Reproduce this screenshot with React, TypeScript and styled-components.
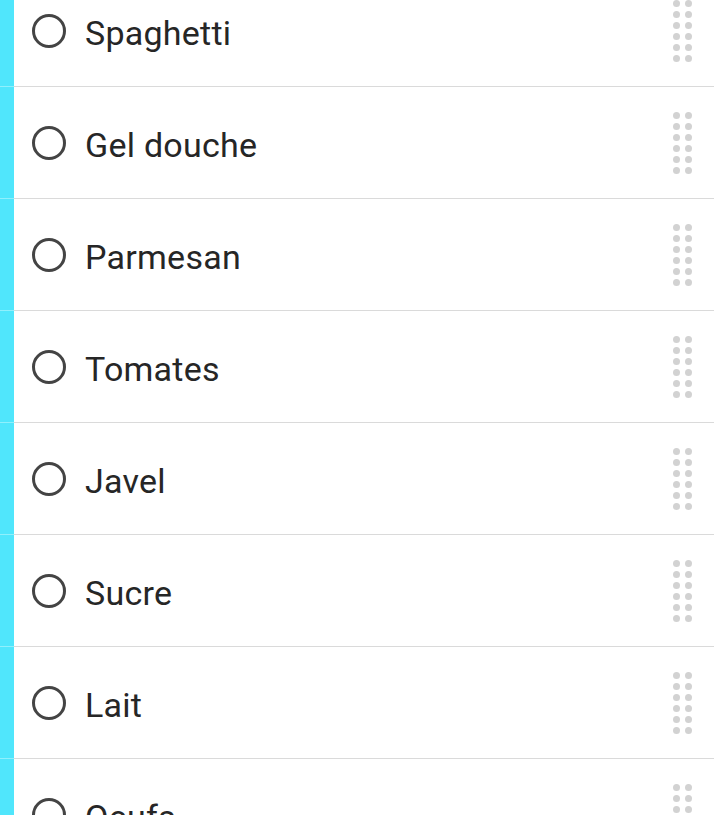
import React, { useLayoutEffect, useRef } from 'react';
import styled, { createGlobalStyle } from 'styled-components';

const GlobalStyle = createGlobalStyle`
  html, body {
    margin: 0;
    padding: 0;
    background: #ffffff;
    font-family: Roboto, "Noto Sans", sans-serif;
  }
`;

const Viewport = styled.div`
  height: 100vh;
  overflow-y: auto;
  scrollbar-width: none;
  &::-webkit-scrollbar {
    display: none;
  }
`;

const List = styled.ul`
  list-style: none;
  margin: 0;
  padding: 0;
`;

const Row = styled.li`
  display: flex;
  height: 112px;
`;

const Stripe = styled.div`
  width: 14px;
  flex-shrink: 0;
  background: #50e6fc;
  box-shadow: inset 0 -1px 0 #8ff0fd;
`;

const Content = styled.div`
  flex: 1;
  display: flex;
  align-items: center;
  padding: 0 22px 0 18px;
  border-bottom: 1px solid #dadada;
`;

const Check = styled.span`
  width: 28px;
  height: 28px;
  border: 3px solid #444444;
  border-radius: 50%;
  flex-shrink: 0;
`;

const Label = styled.span`
  flex: 1;
  margin-left: 19px;
  padding-top: 4px;
  font-size: 34px;
  color: #262626;
  letter-spacing: 0.25px;
`;

const Handle = styled.div`
  display: grid;
  grid-template-columns: repeat(2, 7px);
  grid-auto-rows: 7px;
  column-gap: 5px;
  row-gap: 4px;
`;

const Dot = styled.span`
  border-radius: 50%;
  background: #d2d2d2;
`;

const items = ['Spaghetti', 'Gel douche', 'Parmesan', 'Tomates', 'Javel', 'Sucre', 'Lait', 'Oeufs'];

export default function App() {
  const ref = useRef<HTMLDivElement>(null);

  useLayoutEffect(() => {
    if (ref.current) ref.current.scrollTop = 25;
  }, []);

  return (
    <>
      <GlobalStyle />
      <Viewport ref={ref}>
        <List>
          {items.map((name) => (
            <Row key={name}>
              <Stripe />
              <Content>
                <Check />
                <Label>{name}</Label>
                <Handle>
                  {Array.from({ length: 12 }).map((_, i) => (
                    <Dot key={i} />
                  ))}
                </Handle>
              </Content>
            </Row>
          ))}
        </List>
      </Viewport>
    </>
  );
}
